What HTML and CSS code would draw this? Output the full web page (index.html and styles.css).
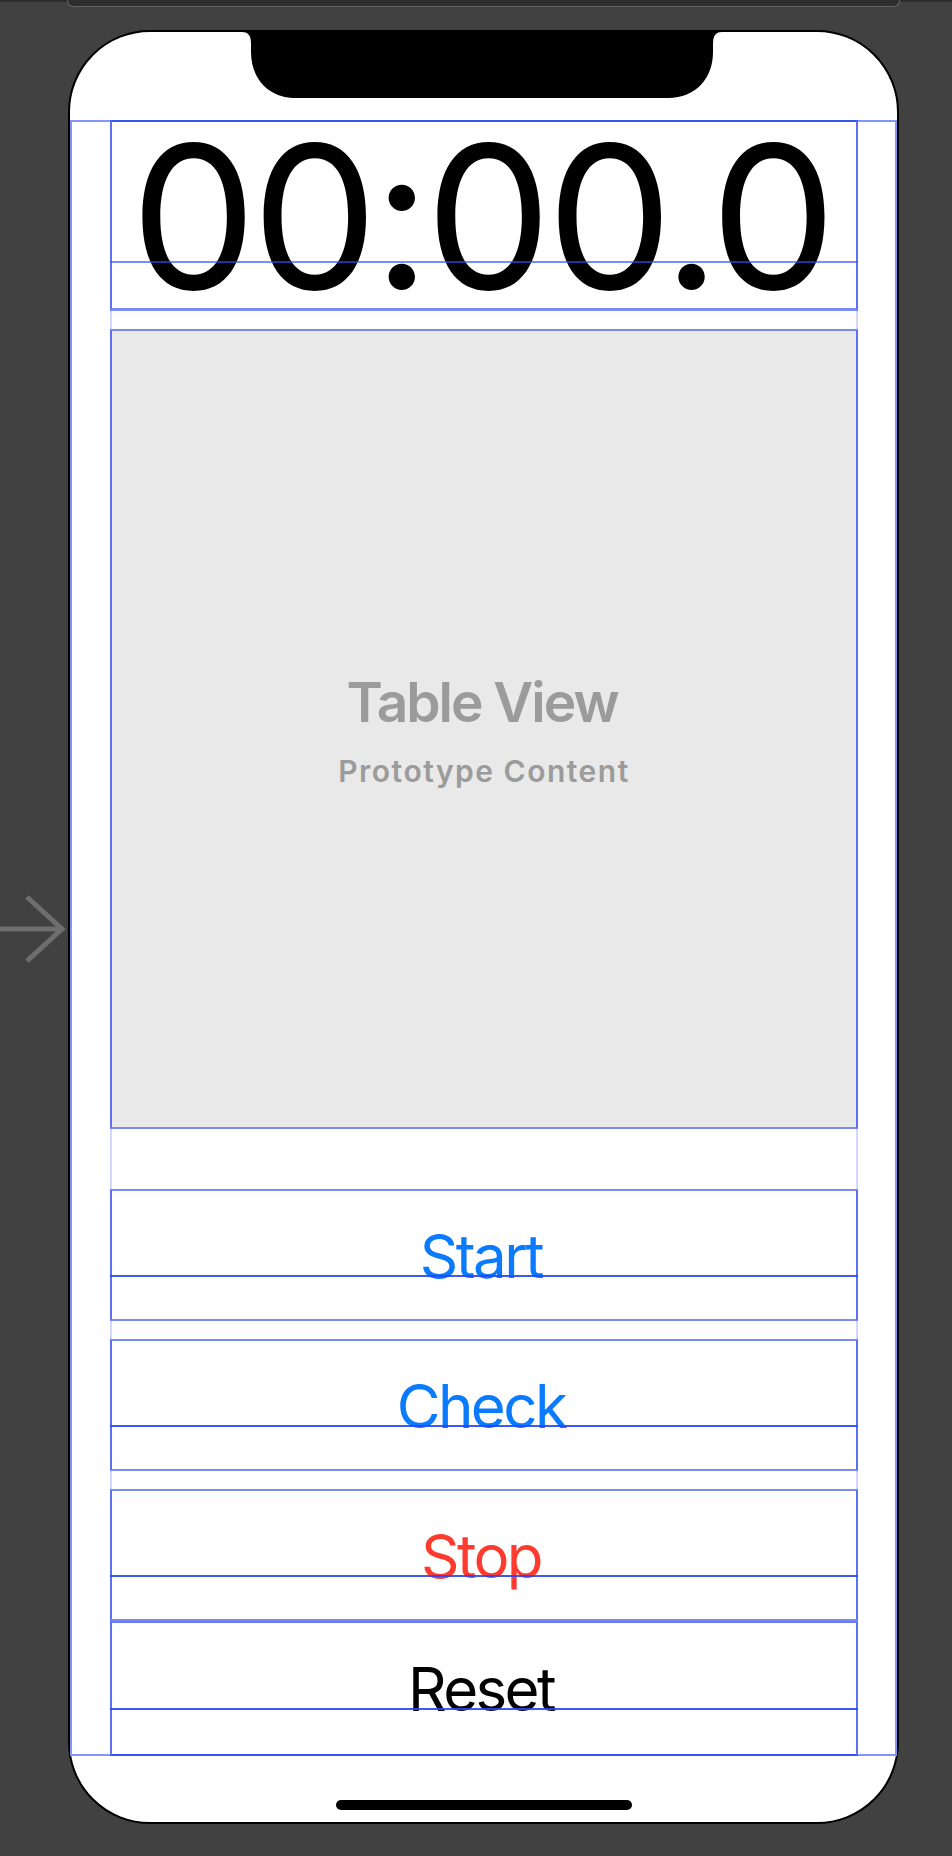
FILE: index.html
```
<!DOCTYPE html>
<html lang="en">
<head>
<meta charset="utf-8">
<title>Stopwatch storyboard</title>
<link rel="stylesheet" href="styles.css">
</head>
<body>
<div class="topbar"><div class="dock"></div></div>
<div class="stage">
  <div class="entry">
    <svg class="entry-arrow" width="68" height="70" viewBox="0 0 68 70">
      <path d="M0 35 H62 M27 3 L62 35 L27 67" fill="none" stroke="#6e6e6e" stroke-width="5"/>
    </svg>
  </div>
  <div class="phone">
    <svg class="notch" width="480" height="66" viewBox="0 0 480 66">
      <path d="M0 0 C6 0 9 3 9 12 L9 20 C9 46 26 66 54 66 L426 66 C454 66 471 46 471 20 L471 12 C471 3 474 0 480 0 Z" fill="#000"/>
    </svg>
    <div class="safe">
      <div class="stack">
        <div class="view time-label">
          <span class="time">00:00.0</span>
          <i class="guide guide-label"></i>
        </div>
        <div class="view table">
          <div class="table-title">Table View</div>
          <div class="table-sub">Prototype Content</div>
        </div>
        <div class="view btn btn-start">
          <span class="btn-text blue">Start</span>
          <i class="guide"></i>
        </div>
        <div class="view btn btn-check">
          <span class="btn-text blue">Check</span>
          <i class="guide"></i>
        </div>
        <div class="view btn btn-stop">
          <span class="btn-text red">Stop</span>
          <i class="guide"></i>
        </div>
        <div class="view btn btn-reset">
          <span class="btn-text black">Reset</span>
          <i class="guide"></i>
        </div>
      </div>
    </div>
    <div class="home-indicator"></div>
  </div>
</div>
</body>
</html>
```
FILE: styles.css
```
html, body {
  margin: 0;
  padding: 0;
}
body {
  width: 952px;
  height: 1856px;
  overflow: hidden;
  background: #414141;
  font-family: "Inter", "Liberation Sans", sans-serif;
}
.topbar {
  height: 7px;
  background: linear-gradient(#2b2c2e 0, #2b2c2e 2px, #414141 2px);
}
.dock {
  margin-left: 67px;
  width: 833px;
  height: 7px;
  box-sizing: border-box;
  background: #2e2e2e;
  border: 1px solid #666;
  border-top: none;
  border-radius: 0 0 6px 6px;
}
.stage {
  display: flex;
  align-items: center;
  margin-top: 23px;
}
.entry {
  width: 68px;
  display: flex;
  padding-top: 4px;
}
.entry-arrow {
  display: block;
}
.phone {
  width: 831px;
  height: 1794px;
  box-sizing: border-box;
  border: 2px solid #000;
  border-radius: 82px;
  background: #fff;
  display: flex;
  flex-direction: column;
  align-items: center;
}
.notch {
  display: block;
  margin-left: -3px;
  flex: none;
}
.safe {
  margin-top: 22px;
  width: 100%;
  height: 1636px;
  box-sizing: border-box;
  border: 2px solid #8595f6;
  padding: 0 37px 0 38px;
  flex: none;
}
.stack {
  margin: -2px 0;
  height: 1636px;
  box-sizing: border-box;
  border-left: 2px solid #d3d7fb;
  border-right: 2px solid #d3d7fb;
  display: flex;
  flex-direction: column;
}
.view {
  position: relative;
  margin: 0 -2px;
  box-sizing: border-box;
  border: 2px solid #7b8bf5;
  border-left-color: #5d70f4;
  border-right-color: #5d70f4;
  flex: none;
}
.guide {
  position: absolute;
  left: -2px;
  right: -2px;
  top: 84px;
  height: 2px;
  background: rgba(40, 70, 245, 0.9);
}
.time-label {
  height: 191px;
  border-top-color: #3a53f4;
  border-bottom: 3px solid #7b8bf5;
  display: flex;
  align-items: center;
  justify-content: center;
}
.time {
  font-size: 200px;
  font-weight: 400;
  color: #000;
  line-height: 1;
  letter-spacing: -5px;
  margin-top: 2px;
  margin-right: 6px;
}
.guide-label {
  top: 139px;
  background: rgba(50, 80, 240, 0.65);
}
.table {
  margin-top: 18px;
  height: 800px;
  background: #e9e9e9;
  display: flex;
  flex-direction: column;
  align-items: center;
  justify-content: center;
  color: #9b9b9b;
  font-weight: 600;
}
.table-title {
  font-size: 55px;
  line-height: 66px;
  letter-spacing: -2px;
  margin-right: 4px;
}
.table-sub {
  font-size: 30px;
  line-height: 36px;
  letter-spacing: 1.5px;
  margin-top: 18px;
}
.btn {
  height: 132px;
  display: flex;
  align-items: center;
  justify-content: center;
}
.btn-start {
  margin-top: 60px;
}
.btn-check,
.btn-stop {
  margin-top: 18px;
}
.btn-reset {
  height: 135px;
  border-top-color: #6a7bf5;
  border-bottom-color: #3a53f4;
}
.btn-reset .guide {
  top: 85px;
}
.btn-text {
  font-size: 60px;
  line-height: 1;
  letter-spacing: -2.6px;
  margin-top: 1px;
  margin-right: 6px;
}
.blue { color: #0a7aff; }
.red { color: #ff3b30; }
.black { color: #000; }
.home-indicator {
  margin-top: 44px;
  width: 296px;
  height: 10px;
  border-radius: 5px;
  background: #000;
  flex: none;
}
```
